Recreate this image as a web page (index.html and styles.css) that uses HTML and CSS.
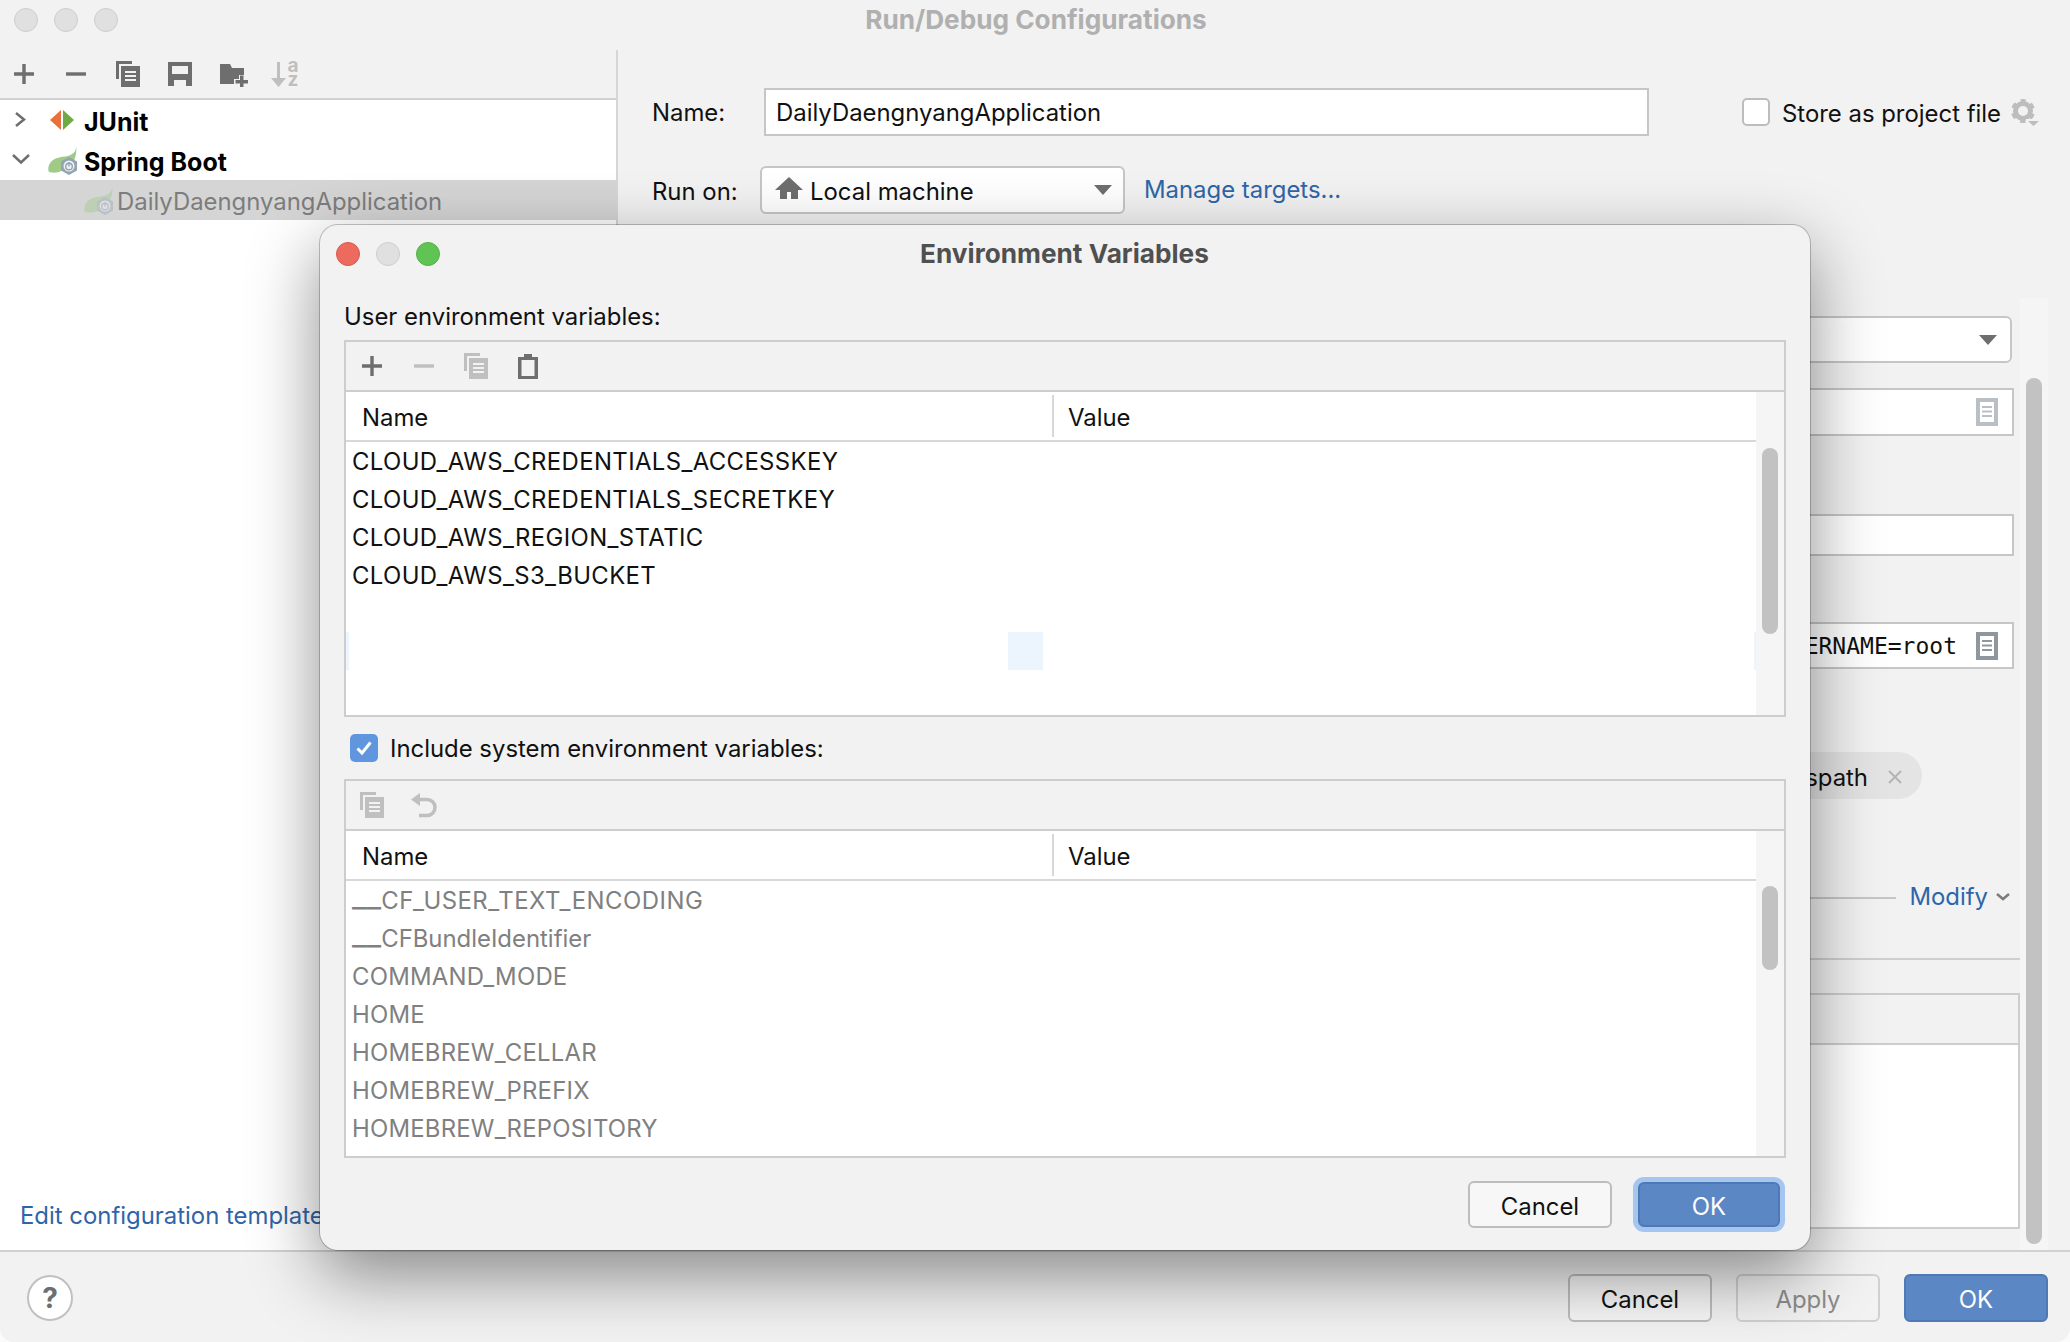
FILE: index.html
```html
<!DOCTYPE html>
<html lang="en">
<head>
<meta charset="utf-8">
<title>Run/Debug Configurations</title>
<link rel="stylesheet" href="styles.css">
</head>
<body>
<svg class="defs" width="0" height="0" aria-hidden="true">
  <symbol id="i-plus" viewBox="0 0 20 20"><path d="M8.300 0h3.400v8.300H20v3.400h-8.300V20H8.300v-8.300H0V8.300h8.300z"/></symbol>
  <symbol id="i-minus" viewBox="0 0 20 20"><path d="M0 8.300h20v3.400H0z"/></symbol>
  <symbol id="i-copy" viewBox="0 0 24 26"><path d="M0 0h16v3H3v15H0z"/><path fill-rule="evenodd" d="M5 5h19v21H5z M9 10h11v2H9z M9 14h11v2H9z M9 18h11v2H9z"/></symbol>
  <symbol id="i-doc" viewBox="0 0 22 28"><path fill-rule="evenodd" d="M0 0h22v28H0z M4 4v20h14V4z"/><path d="M6 8h10v2H6z M6 12.500h10v2H6z M6 17h10v2H6z"/></symbol>
  <symbol id="i-spring" viewBox="0 0 30 28">
    <path fill="#9fcb87" d="M28 0c0 5-3 7-8 9C12 10 4 11 1 18c-1 3-1 5 0 7 3 1 9 1 12-1l13-10c2-5 3-12 2-14z"/>
    <path fill="#93a4b2" d="M21 10l8 4.500v9L21 28l-8-4.500v-9z"/>
    <circle cx="21" cy="19" r="5.500" fill="#eef1f3"/>
    <circle cx="21" cy="19.500" r="3.300" fill="none" stroke="#93a4b2" stroke-width="1.400"/>
    <path stroke="#93a4b2" stroke-width="1.400" d="M21 15v4.500"/>
  </symbol>
</svg>

<div class="window">
  <header class="titlebar">
    <div class="lights">
      <span class="light"></span><span class="light"></span><span class="light"></span>
    </div>
    <div class="window-title">Run/Debug Configurations</div>
  </header>

  <div class="main">
    <aside class="sidebar">
      <div class="side-tools">
        <span class="tool"><svg class="ic-20"><use href="#i-plus"/></svg></span>
        <span class="tool"><svg class="ic-20"><use href="#i-minus"/></svg></span>
        <span class="tool"><svg class="ic-copy"><use href="#i-copy"/></svg></span>
        <span class="tool"><svg class="ic-24" viewBox="0 0 24 24"><path fill-rule="evenodd" d="M0 0h24v24H0z M4 4v8h16V4z M6 18v6h12v-6z"/></svg></span>
        <span class="tool"><svg class="ic-folder" viewBox="0 0 28 23"><path d="M0 0h10l2 4h12v7h-5v4h-5v5H0z"/><path d="M20 11.500h3.500V16H28v3.500h-4.500V23H20v-3.500h-4.500V16H20z"/></svg></span>
        <span class="tool tool-off"><svg class="ic-sort" viewBox="0 0 27 25"><path d="M6 0h3v16h6l-7.500 9L0 16h6z"/><text class="sort-a" x="16.500" y="10">a</text><text class="sort-a" x="16.500" y="23.500">z</text></svg></span>
      </div>
      <div class="tree">
        <div class="tree-row">
          <svg class="chev-r" viewBox="0 0 11 15"><path d="M1 1l8 6.500L1 14" /></svg>
          <svg class="ic-junit" viewBox="0 0 24 20"><path fill="#e8703a" d="M11 0L0 10l11 10z"/><path fill="#6eab45" d="M13 0l11 10-11 10z"/></svg>
          <b class="tree-label">JUnit</b>
        </div>
        <div class="tree-row">
          <svg class="chev-d" viewBox="0 0 18 10"><path d="M1 1l8 7.500L17 1"/></svg>
          <svg class="ic-spring"><use href="#i-spring"/></svg>
          <b class="tree-label spring-label">Spring Boot</b>
        </div>
        <div class="tree-row tree-selected">
          <svg class="ic-spring ic-spring-dim"><use href="#i-spring"/></svg>
          <span class="tree-app">DailyDaengnyangApplication</span>
        </div>
        <a class="template-link">Edit configuration templates...</a>
      </div>
    </aside>

    <section class="pane">
      <div class="pane-top">
        <div class="name-row">
          <label class="field-label">Name:</label>
          <div class="text-input name-input">DailyDaengnyangApplication</div>
          <span class="store-box"></span>
          <span class="store-text">Store as project file</span>
          <svg class="ic-gear" viewBox="0 0 28 28">
            <circle cx="12" cy="13" r="7.500" fill="none" stroke="#bdbdbd" stroke-width="5"/>
            <circle cx="12" cy="13" r="10.500" fill="none" stroke="#bdbdbd" stroke-width="3" stroke-dasharray="5.500 5.500" stroke-dashoffset="2.750" transform="rotate(-90 12 13)"/>
            <path fill="#f2f2f2" d="M15 21h13v7H15z"/>
            <path fill="#bdbdbd" d="M17 23h11l-5.500 5z"/>
          </svg>
        </div>
        <div class="run-row">
          <label class="field-label run-label">Run on:</label>
          <div class="select run-select">
            <svg class="ic-home" viewBox="0 0 28 22"><path d="M14 0l14 13h-5v9h-7v-7h-4v7H5v-9H0z"/></svg>
            <span class="run-value">Local machine</span>
            <span class="arrow"></span>
          </div>
          <a class="link manage">Manage targets...</a>
        </div>
      </div>

      <div class="pane-lower">
        <div class="form">
          <div class="select f-select"><span class="arrow"></span></div>
          <div class="text-input f-input f-input-a"><svg class="ic-doc ic-doc-light"><use href="#i-doc"/></svg></div>
          <div class="text-input f-input f-input-b"></div>
          <div class="text-input f-input f-input-c"><span class="mono">SPRING_DATASOURCE_USERNAME=root</span><svg class="ic-doc ic-doc-dark"><use href="#i-doc"/></svg></div>
          <div class="chip"><span class="chip-text">Add dependencies with "provided" scope to classpath</span><svg class="chip-x" viewBox="0 0 14 14"><path d="M1 1l12 12M13 1L1 13"/></svg></div>
          <div class="modify-row">
            <span class="modify-line"></span>
            <a class="link">Modify</a>
            <svg class="modify-chev" viewBox="0 0 14 8"><path d="M1 1l6 5 6-5"/></svg>
          </div>
          <div class="form-rule"></div>
          <div class="before-box"><div class="before-tools"></div></div>
        </div>
        <div class="pane-track"><div class="pane-thumb"></div></div>
      </div>
    </section>
  </div>

  <footer class="footer">
    <span class="help">?</span>
    <div class="footer-actions">
      <button class="btn">Cancel</button>
      <button class="btn btn-off">Apply</button>
      <button class="btn btn-primary">OK</button>
    </div>
  </footer>

  <div class="dialog">
    <div class="dlg-head">
      <div class="lights dlg-lights">
        <span class="light light-red"></span><span class="light"></span><span class="light light-green"></span>
      </div>
      <div class="dlg-title">Environment Variables</div>
    </div>
    <div class="dlg-label">User environment variables:</div>

    <div class="vars vars-user">
      <div class="vars-tools">
        <span class="tool-sm"><svg class="ic-20"><use href="#i-plus"/></svg></span>
        <span class="tool-sm tool-off"><svg class="ic-20"><use href="#i-minus"/></svg></span>
        <span class="tool-sm tool-off"><svg class="ic-copy"><use href="#i-copy"/></svg></span>
        <span class="tool-sm"><svg class="ic-clip" viewBox="0 0 20 25"><path fill-rule="evenodd" d="M0 3h6V0h8v3h6v22H0z M3.500 6v16h13V6z"/></svg></span>
      </div>
      <div class="vars-body">
        <div class="vars-table">
          <div class="vars-head"><span class="col-name">Name</span><span class="col-value">Value</span></div>
          <div class="var-row">CLOUD_AWS_CREDENTIALS_ACCESSKEY</div>
          <div class="var-row">CLOUD_AWS_CREDENTIALS_SECRETKEY</div>
          <div class="var-row">CLOUD_AWS_REGION_STATIC</div>
          <div class="var-row">CLOUD_AWS_S3_BUCKET</div>
        </div>
        <div class="track"><div class="thumb thumb-user"></div></div>
        <span class="ghost ghost-left"></span>
        <span class="ghost ghost-mid"></span>
        <span class="ghost ghost-right"></span>
      </div>
    </div>

    <label class="include">
      <span class="checked"><svg class="tick" viewBox="0 0 16 14"><path d="M1.500 7.500l4.500 4.500 8.500-10.500"/></svg></span>
      <span>Include system environment variables:</span>
    </label>

    <div class="vars vars-system">
      <div class="vars-tools">
        <span class="tool-sm tool-off"><svg class="ic-copy"><use href="#i-copy"/></svg></span>
        <span class="tool-sm tool-off"><svg class="ic-undo" viewBox="0 0 26 24"><path fill="currentColor" d="M9 0v13L0 6.500z"/><path fill="none" stroke="currentColor" stroke-width="3.500" d="M7 6.500h9a8 8 0 0 1 0 16H8"/></svg></span>
      </div>
      <div class="vars-body">
        <div class="vars-table">
          <div class="vars-head"><span class="col-name">Name</span><span class="col-value">Value</span></div>
          <div class="var-row var-sys var-long"><span class="us">__</span>CF_USER_TEXT_ENCODING</div>
          <div class="var-row var-sys var-camel"><span class="us">__</span>CFBundleIdentifier</div>
          <div class="var-row var-sys">COMMAND_MODE</div>
          <div class="var-row var-sys">HOME</div>
          <div class="var-row var-sys">HOMEBREW_CELLAR</div>
          <div class="var-row var-sys">HOMEBREW_PREFIX</div>
          <div class="var-row var-sys">HOMEBREW_REPOSITORY</div>
        </div>
        <div class="track"><div class="thumb thumb-system"></div></div>
      </div>
    </div>

    <div class="dlg-actions">
      <button class="btn dlg-cancel">Cancel</button>
      <button class="btn btn-primary dlg-ok">OK</button>
    </div>
  </div>
</div>
</body>
</html>
```
FILE: styles.css
```css
* { box-sizing: border-box; }
html, body { margin: 0; padding: 0; }
body {
  width: 2070px;
  height: 1342px;
  overflow: hidden;
  background: #fbfbfb;
  font-family: Inter, "Liberation Sans", sans-serif;
  font-size: 23.900px;
  color: #111;
}
.defs { position: absolute; }
svg { display: block; flex: none; fill: currentColor; overflow: visible; }

.window {
  position: relative;
  width: 2070px;
  height: 1342px;
  display: flex;
  flex-direction: column;
  background: #f2f2f2;
  border-radius: 0 0 14px 14px;
  overflow: hidden;
}

/* title bar */
.titlebar {
  height: 50px;
  flex: none;
  display: flex;
  align-items: center;
  padding-left: 14px;
  position: relative;
}
.lights { display: flex; gap: 16px; }
.light {
  width: 24px;
  height: 24px;
  border-radius: 50%;
  background: #e0e0e0;
  border: 1px solid #cdcdcd;
}
.titlebar .lights { margin-top: -10px; }
.window-title {
  flex: 1;
  text-align: center;
  margin: -12px 0 0 -116px;
  font-weight: 700;
  font-size: 26.200px;
  color: #b0b0b0;
}
.light-red { background: #ec6a5e; border-color: #d9594e; }
.light-green { background: #5fc454; border-color: #52b347; }

/* main */
.main { flex: 1; display: flex; min-height: 0; }
.sidebar {
  width: 618px;
  flex: none;
  display: flex;
  flex-direction: column;
  border-right: 2px solid #d6d6d6;
}
.side-tools {
  height: 50px;
  flex: none;
  display: flex;
  align-items: center;
  gap: 12px;
  padding-left: 4px;
  border-bottom: 2px solid #d1d1d1;
  color: #6e6e6e;
}
.tool { width: 40px; height: 30px; display: flex; align-items: center; justify-content: center; }
.tool-off { color: #bfbfbf; }
.ic-20 { width: 20px; height: 20px; }
.ic-copy { width: 24px; height: 26px; }
.ic-24 { width: 24px; height: 24px; }
.ic-folder { width: 28px; height: 23px; margin: 3px 0 0 4px; }
.ic-sort { width: 27px; height: 25px; }
.sort-a { font-size: 19px; font-weight: 700; fill: #bfbfbf; }

.tree {
  flex: 1;
  background: #fff;
  display: flex;
  flex-direction: column;
  min-height: 0;
}
.tree-row { height: 40px; flex: none; display: flex; align-items: center; position: relative; padding-left: 15px; }
.chev-r { width: 11px; height: 15px; fill: none; stroke: #6e6e6e; stroke-width: 2.500; margin-top: -2px; }
.chev-d { width: 18px; height: 10px; fill: none; stroke: #6e6e6e; stroke-width: 2.500; margin: -3px 0 0 -3px; }
.ic-junit { width: 24px; height: 20px; margin-left: 24px; }
.ic-spring { width: 30px; height: 28px; margin-left: 18px; margin-top: 2px; }
.tree-label { margin-left: 10px; padding-top: 3px; font-size: 25px; font-weight: 700; color: #000; }
.spring-label { margin-left: 6px; }
.tree-selected { background: #d5d5d5; padding-left: 84px; }
.ic-spring-dim { margin-left: 0; opacity: .42; }
.tree-app { margin-left: 3px; padding-top: 2px; color: #7d7d7d; }
.template-link {
  margin-top: auto;
  margin-bottom: 20px;
  padding-left: 20px;
  color: #2f65a8;
  white-space: nowrap;
}

/* right pane */
.pane { flex: 1; min-width: 0; display: flex; flex-direction: column; }
.pane-top { height: 248px; flex: none; padding-top: 38px; }
.name-row { height: 48px; display: flex; align-items: center; padding-left: 34px; }
.field-label { width: 112px; flex: none; }
.text-input { background: #fff; border: 2px solid #c6c6c6; }
.name-input {
  width: 885px;
  height: 48px;
  flex: none;
  display: flex;
  align-items: center;
  padding-left: 10px;
}
.store-box {
  width: 28px;
  height: 28px;
  margin-left: 93px;
  flex: none;
  background: #fff;
  border: 2px solid #bdbdbd;
  border-radius: 5px;
}
.store-text { margin-left: 12px; padding-top: 2px; white-space: nowrap; }
.ic-gear { width: 28px; height: 28px; margin: 0 0 0 10px; }
.run-row { height: 48px; margin-top: 30px; display: flex; align-items: center; padding-left: 34px; }
.run-label { width: 108px; padding-top: 2px; }
.select {
  display: flex;
  align-items: center;
  background: #fff;
  border: 2px solid #c6c6c6;
  border-radius: 6px;
}
.run-select { width: 365px; height: 48px; padding-left: 13px; }
.ic-home { width: 28px; height: 22px; color: #6e6e6e; margin-top: -4px; }
.run-value { margin-left: 7px; padding-top: 2px; }
.arrow {
  margin-left: auto;
  width: 0;
  height: 0;
  border-left: 9px solid transparent;
  border-right: 9px solid transparent;
  border-top: 10px solid #6e6e6e;
}
.run-select .arrow { margin-right: 11px; }
.link { color: #2f65a8; white-space: nowrap; }
.manage { margin-left: 19px; margin-top: -2px; }

.pane-lower { flex: 1; min-height: 0; display: flex; padding-right: 22px; }
.form { flex: 1; min-width: 0; display: flex; flex-direction: column; padding: 18px 0 0 33px; }
.pane-track {
  width: 28px;
  flex: none;
  background: #f5f5f5;
  padding: 80px 6px 6px;
}
.pane-thumb { height: 866px; background: #c2c2c2; border-radius: 8px; }

.f-select { height: 47px; flex: none; margin-right: 8px; padding-right: 13px; }
.f-input { flex: none; margin-right: 6px; display: flex; align-items: center; justify-content: flex-end; }
.f-input-a { height: 48px; margin-top: 25px; padding-right: 14px; }
.f-input-b { height: 42px; margin-top: 78px; }
.f-input-c { height: 47px; margin-top: 66px; padding-right: 14px; }
.mono { font-family: "DejaVu Sans Mono", "Liberation Mono", monospace; font-size: 23px; margin-right: 19px; color: #111; white-space: nowrap; }
.ic-doc { width: 22px; height: 28px; }
.ic-doc-light { color: #b8c0c6; }
.ic-doc-dark { color: #8e979e; }
.chip {
  align-self: flex-end;
  height: 47px;
  margin-top: 83px;
  margin-right: 98px;
  padding: 0 20px 0 24px;
  display: flex;
  align-items: center;
  background: #e4e4e4;
  border-radius: 24px;
  white-space: nowrap;
}
.chip-text { padding-top: 3px; }
.chip-x { width: 14px; height: 14px; margin: 2px 0 0 20px; fill: none; stroke: #b4b4b4; stroke-width: 2; }
.modify-row { height: 32px; margin-top: 81px; display: flex; align-items: center; margin-right: 10px; flex: none; }
.modify-line { flex: 1; height: 2px; background: #c6c6c6; margin-top: 4px; margin-right: 13px; }
.modify-chev { width: 14px; height: 8px; margin-left: 8px; fill: none; stroke: #7c7c7c; stroke-width: 2.500; margin-top: 2px; }
.form-rule { height: 2px; background: #cfcfcf; margin-top: 46px; flex: none; }
.before-box { height: 236px; margin-top: 33px; flex: none; background: #fff; border: 2px solid #cdcdcd; }
.before-tools { height: 50px; background: #f2f2f2; border-bottom: 2px solid #cdcdcd; }

/* footer */
.footer {
  height: 92px;
  flex: none;
  display: flex;
  align-items: flex-start;
  padding: 22px 22px 0 27px;
  border-top: 2px solid #d1d1d1;
}
.help {
  width: 46px;
  height: 46px;
  border-radius: 50%;
  background: #fff;
  border: 2px solid #c0c0c0;
  color: #6e6e6e;
  font-weight: 700;
  font-size: 28px;
  display: flex;
  align-items: center;
  justify-content: center;
  margin-top: 1px;
}
.footer-actions { margin-left: auto; display: flex; gap: 24px; }
.btn {
  width: 144px;
  height: 48px;
  font: inherit;
  color: #111;
  background: #f7f7f7;
  border: 2px solid #bdbdbd;
  border-radius: 6px;
  padding: 3px 0 0;
}
.btn-off { background: transparent; color: #8c8c8c; border-color: #d0d0d0; }
.btn-primary { background: #5b87c4; border-color: #4f79b5; color: #fff; }

/* dialog */
.dialog {
  position: absolute;
  left: 320px;
  top: 225px;
  width: 1490px;
  height: 1025px;
  padding: 0 24px;
  display: flex;
  flex-direction: column;
  background: #f2f2f2;
  border-radius: 18px;
  box-shadow: 0 0 0 1px rgba(0,0,0,.22), 0 24px 70px rgba(0,0,0,.45);
}
.dlg-head { height: 56px; flex: none; position: relative; display: flex; align-items: center; justify-content: center; }
.dlg-lights { position: absolute; left: -8px; top: 17px; }
.dlg-title { font-weight: 700; font-size: 26.200px; color: #505050; margin-left: -1px; }
.dlg-label { height: 34px; margin-top: 18px; line-height: 35px; flex: none; }
.vars { border: 2px solid #cdcdcd; flex: none; display: flex; flex-direction: column; }
.vars-user { height: 377px; margin-top: 7px; }
.vars-system { height: 379px; margin-top: 17px; }
.vars-tools {
  height: 50px;
  flex: none;
  display: flex;
  align-items: center;
  gap: 12px;
  padding-left: 6px;
  border-bottom: 2px solid #cdcdcd;
  color: #6e6e6e;
}
.tool-sm { width: 40px; height: 30px; display: flex; align-items: center; justify-content: center; }
.ic-clip { width: 20px; height: 25px; }
.ic-undo { width: 26px; height: 24px; }
.vars-body { flex: 1; min-height: 0; display: flex; position: relative; }
.vars-table { flex: 1; min-width: 0; background: #fff; overflow: hidden; }
.vars-head { height: 50px; display: flex; align-items: center; border-bottom: 2px solid #d8d8d8; }
.col-name { width: 708px; height: 42px; line-height: 45px; padding-left: 16px; border-right: 2px solid #d8d8d8; flex: none; }
.col-value { height: 42px; line-height: 45px; padding-left: 14px; }
.var-row { height: 38px; line-height: 39px; padding-left: 6px; white-space: nowrap; letter-spacing: .38px; }
.var-sys { color: #808080; letter-spacing: .22px; }
.var-long { letter-spacing: .5px; }
.var-camel { letter-spacing: 0; }
.us { font-size: 32px; letter-spacing: 0; line-height: 0; vertical-align: 2px; }
.track { width: 28px; flex: none; background: #f5f5f5; padding: 0 6px; }
.thumb { background: #c2c2c2; border-radius: 8px; }
.thumb-user { height: 186px; margin-top: 56px; }
.thumb-system { height: 84px; margin-top: 55px; }
.ghost { position: absolute; background: #ecf4fd; top: 240px; height: 38px; }
.ghost-left { left: 0; width: 3px; }
.ghost-mid { left: 662px; width: 35px; }
.ghost-right { left: 1408px; width: 2px; }
.include { height: 28px; margin-top: 17px; flex: none; display: flex; align-items: center; padding-left: 6px; gap: 12px; }
.checked {
  width: 28px;
  height: 28px;
  flex: none;
  border-radius: 5px;
  background: #5f96dd;
  display: flex;
  align-items: center;
  justify-content: center;
}
.tick { width: 16px; height: 14px; fill: none; stroke: #fff; stroke-width: 3; }
.dlg-actions { display: flex; justify-content: flex-end; align-items: center; margin-top: 23px; margin-right: 2px; flex: none; }
.dlg-cancel { height: 47px; }
.dlg-ok {
  width: 142px;
  height: 45px;
  margin: 0 4px 0 26px;
  box-shadow: 0 0 0 5px #a5c6f0;
}
```
